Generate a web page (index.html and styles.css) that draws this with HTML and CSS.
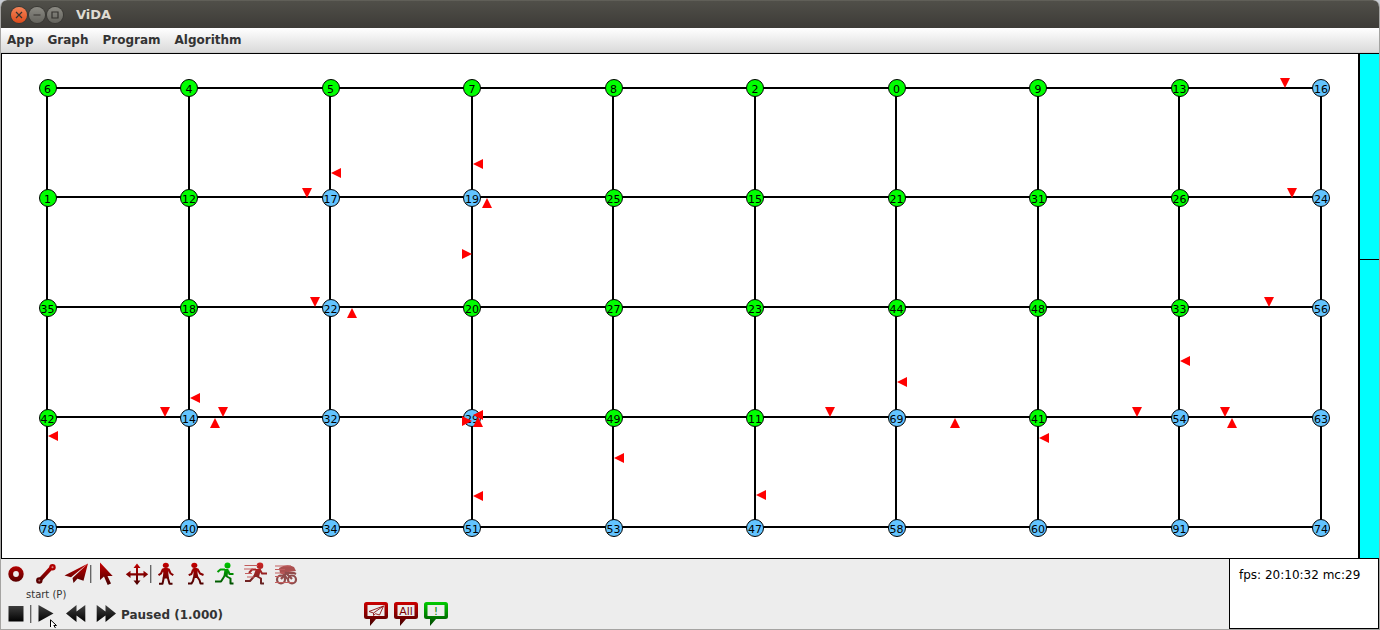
FILE: index.html
```
<!DOCTYPE html>
<html lang="en">
<head>
<meta charset="utf-8">
<title>ViDA</title>
<link rel="stylesheet" href="styles.css">
</head>
<body>
<svg class="defs" aria-hidden="true">
  <defs>
    <linearGradient id="red" gradientUnits="userSpaceOnUse" x1="0" y1="3" x2="0" y2="27"><stop offset="0" stop-color="#cc0000"/><stop offset="1" stop-color="#400000"/></linearGradient>
    <linearGradient id="green" gradientUnits="userSpaceOnUse" x1="0" y1="3" x2="0" y2="27"><stop offset="0" stop-color="#00cc00"/><stop offset="1" stop-color="#004400"/></linearGradient>
    <linearGradient id="black" gradientUnits="userSpaceOnUse" x1="0" y1="5" x2="0" y2="23"><stop offset="0" stop-color="#444"/><stop offset="1" stop-color="#000"/></linearGradient>
  </defs>
</svg>
<div class="window">
  <header class="titlebar">
    <button class="wm wm-close" aria-label="Close"><svg viewBox="0 0 16 16"><path d="M5 5l6 6M11 5l-6 6"/></svg></button>
    <button class="wm" aria-label="Minimize"><svg viewBox="0 0 16 16"><path d="M4.500 8h7"/></svg></button>
    <button class="wm" aria-label="Maximize"><svg viewBox="0 0 16 16"><path d="M5 5h6v6h-6z"/></svg></button>
    <h1 class="title">ViDA</h1>
  </header>
  <nav class="menubar">
    <button class="menu">App</button>
    <button class="menu">Graph</button>
    <button class="menu">Program</button>
    <button class="menu">Algorithm</button>
  </nav>
  <main class="workspace">
    <svg class="graph" id="graph" viewBox="2 54 1356 504" role="img" aria-label="Graph"></svg>
    <aside class="levels"><div class="level level-top"></div><div class="level level-bottom"></div></aside>
  </main>
  <footer class="panel">
    <div class="controls">
      <div class="row">
        <button class="tool" aria-label="Add vertex"><svg viewBox="0 0 30 30"><circle cx="15" cy="15" r="5.300" fill="none" stroke="url(#red)" stroke-width="4.800"/></svg></button>
        <button class="tool" aria-label="Add edge"><svg viewBox="0 0 30 30"><path d="M8 22L21 8" stroke="url(#red)" stroke-width="4"/><circle cx="8.300" cy="21.500" r="3.200" fill="#5a0000"/><circle cx="21.500" cy="8.300" r="3.200" fill="#b00000"/><circle cx="8.300" cy="21.500" r="1" fill="#a66"/><circle cx="21.500" cy="8.300" r="1" fill="#d88"/></svg></button>
        <button class="tool" aria-label="Add message"><svg viewBox="0 0 30 30"><path d="M27 4.500L3.500 16.500l6.500 1.800zM27 4.500L11.500 19l1 5 3.200-3.500zM27 4.500L14.500 19l8 2.800z" fill="url(#red)"/></svg></button>
        <span class="sep"></span>
        <button class="tool" aria-label="Select"><svg viewBox="0 0 30 30"><path d="M9 3.500V21l4-3.500 3.700 8.500 3.300-1.600-3.500-7.400h5.200z" fill="url(#red)"/></svg></button>
        <button class="tool" aria-label="Move"><svg viewBox="0 0 30 30"><path d="M16 4.500l3.500 4.500h-2.500v5.200H22.500v-2.500l4.700 3.600-4.700 3.600v-2.500h-5.500v5.200h2.500l-3.500 4.500-3.500-4.500h2.500v-5.200H9.500v2.500l-4.700-3.600 4.700-3.600v2.500h5.500V9h-2.500z" fill="url(#red)"/></svg></button>
        <span class="sep"></span>
        <button class="tool" aria-label="Very slow"><svg viewBox="0 0 30 30"><ellipse cx="14.800" cy="6.300" rx="3" ry="2.600" fill="url(#red)"/><path d="M11.500 9.500q3.300-1.500 6.600 0l-.8 4.500.7 5.500h-6.400l.7-5.500z" fill="url(#red)"/><path d="M12 10l-2 4.500-2.500 1.700M17.600 10l2 4.500 2.700 1.700M12.800 18.500l-1.300 6.300H8M16.800 18.500l1.700 6.300h3" class="limb limb-red"/></svg></button>
        <button class="tool" aria-label="Slow"><svg viewBox="0 0 30 30"><ellipse cx="13.300" cy="6.300" rx="3" ry="2.600" fill="url(#red)"/><path d="M11.500 9.500q3-1.500 5.500 0l-.5 4.500 1 5h-5.500l.5-5z" fill="url(#red)"/><path d="M12 10.500l-1.500 4.500-2.800 1.200M16.500 10l2.500 4.500 3.500 1.500M13 18l-1 4-1.500 2.600H7M16.300 18l2.200 3 1 3.600H22.500" class="limb limb-red"/></svg></button>
        <button class="tool" aria-label="Normal"><svg viewBox="0 0 30 30"><circle cx="16.500" cy="6.500" r="3" fill="url(#green)"/><path d="M13.500 10h4l-1 7.500h-4z" fill="url(#green)"/><path d="M14 10.500H9.500L6.500 13M17 11.500L18.500 15h4M13.500 17l-3.500 5.500H4M15 17l4.500 2.500v5h3" class="limb limb-green"/></svg></button>
        <button class="tool" aria-label="Fast"><svg viewBox="0 0 30 30" class="motion"><circle cx="19" cy="6.700" r="3.300" fill="url(#red)"/><path d="M15 10h5l-2 8h-6z" fill="url(#red)"/><path d="M15 10.500h-4L8 14M19 11l2 3.500h5M13.500 17L9 22H4M15.500 17l4.500 2.500v5h3" class="limb limb-red"/><path d="M3.500 6.500H17M3 10H12M4 14.500H11M6 18H13" class="streak"/></svg></button>
        <button class="tool" aria-label="Very fast"><svg viewBox="0 0 30 30" class="motion"><path d="M8 9Q16 4 23 8l2 4-7 1-4 4-5-3z" fill="#a03535"/><g fill="none" stroke="#803030" stroke-width="2.200"><circle cx="10" cy="20.500" r="4"/><circle cx="21" cy="20.500" r="4"/><path d="M10 20l5-6 6 6M13 14h10l2 1M16 20l-3-5"/></g><path d="M4 7H20M4 10.500H14M4 14H14M4 17.500H10M4 23.500H22" class="streak"/></svg></button>
      </div>
      <div class="hint">start (P)</div>
      <div class="row">
        <button class="tool" aria-label="Stop"><svg viewBox="0 0 30 30"><path d="M7.500 7h15v15.500h-15z" fill="url(#black)"/></svg></button>
        <span class="sep"></span>
        <button class="tool tool-active" aria-label="Start"><svg viewBox="0 0 30 30"><path d="M7.500 6L22.500 14.500 7.500 22.800z" fill="url(#black)"/></svg><svg class="pointer" viewBox="0 0 8 9" aria-hidden="true"><path d="M.5 8V.8L6.500 6.500H3.800L5.500 9" fill="#fff" stroke="#000"/></svg></button>
        <button class="tool" aria-label="Slower"><svg viewBox="0 0 30 30"><path d="M5 14.500L15.500 6v6.500L24.300 6v17l-8.800-6.500V23z" fill="url(#black)"/></svg></button>
        <button class="tool" aria-label="Faster"><svg viewBox="0 0 30 30"><path d="M25 14.500L14.500 6v6.500L5.700 6v17l8.800-6.500V23z" fill="url(#black)"/></svg></button>
        <output class="status">Paused (1.000)</output>
        <button class="tool" aria-label="Message on send"><svg viewBox="0 0 30 30"><path d="M5.500 3h19Q27 3 27 5.500v12Q27 20 24.500 20H15l-6 7V20H5.500Q3 20 3 17.500v-12Q3 3 5.500 3z" fill="url(#red)"/><path d="M6.500 6h17v11h-17z" fill="#ededed"/><path d="M22.500 7L8 12.500l4.500 1.500v2.500l2-1.800 4 1.300zM22.500 7l-10 7" fill="none" stroke="#8c1010" stroke-width=".9"/></svg></button>
        <button class="tool" aria-label="All messages"><svg viewBox="0 0 30 30"><path d="M5.500 3h19Q27 3 27 5.500v12Q27 20 24.500 20H15l-6 7V20H5.500Q3 20 3 17.500v-12Q3 3 5.500 3z" fill="url(#red)"/><path d="M6.500 6h17v11h-17z" fill="#ededed"/><text x="15" y="16" class="bubble bubble-red">All</text></svg></button>
        <button class="tool" aria-label="Alerts"><svg viewBox="0 0 30 30"><path d="M5.500 3h19Q27 3 27 5.500v12Q27 20 24.500 20H15l-6 7V20H5.500Q3 20 3 17.500v-12Q3 3 5.500 3z" fill="url(#green)"/><path d="M6.500 6h17v11h-17z" fill="#ededed"/><text x="15" y="16" class="bubble bubble-green">!</text></svg></button>
      </div>
    </div>
    <div class="info">fps: 20:10:32 mc:29</div>
  </footer>
</div>
<script src="graph.js"></script>
</body>
</html>
```
FILE: styles.css
```
* { box-sizing: border-box; }
body { margin: 0; background: #c9cdd4; font-family: "DejaVu Sans", sans-serif; font-size: 12px; color: #333; }
button { margin: 0; padding: 0; border: 0; background: none; font: inherit; color: inherit; }
.defs { position: absolute; width: 0; height: 0; }

.window { display: flex; flex-direction: column; height: 100vh; border: 1px solid #a5a4a2; border-top: 0; border-radius: 7px 7px 0 0; background: #ededed; overflow: hidden; }

.titlebar { display: flex; align-items: center; gap: 2px; flex: none; height: 28px; margin: 0 -1px; padding-left: 11px; background: linear-gradient(#504f49, #3d3b37); border-top: 1px solid #605f58; border-radius: 7px 7px 0 0; }
.wm { width: 16px; height: 16px; border-radius: 50%; background: linear-gradient(#8b8a83, #64635d); box-shadow: 0 0 0 1px #3a3935; }
.wm-close { background: linear-gradient(#f58458, #dd4b1b); }
.wm svg { display: block; width: 16px; height: 16px; fill: none; stroke: #35332f; stroke-width: 1.2; }
.title { margin: 0 0 0 11px; font-size: 13px; font-weight: bold; line-height: 16px; color: #dfdbd2; }

.menubar { display: flex; align-items: center; gap: 14px; flex: none; height: 25px; padding-left: 6px; background: linear-gradient(#fff, #dadada); border-bottom: 1px solid #ccc; font-weight: bold; }
.menu { line-height: 16px; }

.workspace { display: flex; flex: 1; min-height: 0; border: 1px solid #000; border-right: 0; }
.graph { flex: 1; min-width: 0; height: 100%; background: #fff; }
.edge { stroke: #000; stroke-width: 2; shape-rendering: crispEdges; }
.node { stroke: #000; stroke-width: 1; fill: #63c4ff; }
.node-done { fill: #0f0; }
.node-label { font-size: 11px; text-anchor: middle; fill: #000; }
.message { fill: #f00; }
.levels { display: flex; flex-direction: column; flex: none; width: 21px; border-left: 2px solid #000; background: #0ff; }
.level-top { flex: 205; border-bottom: 1px solid #000; }
.level-bottom { flex: 298; }

.panel { display: flex; justify-content: space-between; flex: none; }
.row { display: flex; align-items: center; height: 30px; }
.tool { position: relative; width: 30px; height: 30px; }
.tool svg { display: block; width: 30px; height: 30px; }
.sep { width: 2px; height: 18px; margin: 0 -1px; border-left: 1px solid #666; border-right: 1px solid #bbb; }
.limb { fill: none; stroke-width: 2; stroke-linejoin: round; }
.limb-red { stroke: url(#red); }
.limb-green { stroke: url(#green); }
.streak { fill: none; stroke: #b44; stroke-width: 1; }
.motion { filter: blur(0.5px); opacity: 0.85; }
.hint { height: 10px; padding-left: 25px; font-size: 10px; line-height: 12px; }
.tool .pointer { position: absolute; left: 19px; top: 20px; width: 8px; height: 9px; }
.status { width: 240px; padding-top: 2px; font-weight: bold; }
.bubble { font-size: 11px; text-anchor: middle; }
.bubble-red { fill: #7c0000; }
.bubble-green { fill: #080; }
.info { width: 150px; padding: 8px 9px; border: 1px solid #000; border-top: 0; background: #fff; color: #000; line-height: 16px; }
```
FILE: graph.js
```
const columns = [47, 188.5, 330, 471.5, 613, 754.5, 896, 1037.5, 1179, 1320.5];
const rows = [88, 197, 307, 417, 527];
const ids = [
  [6, 4, 5, 7, 8, 2, 0, 9, 13, 16],
  [1, 12, 17, 19, 25, 15, 21, 31, 26, 24],
  [35, 18, 22, 20, 27, 23, 44, 48, 33, 56],
  [42, 14, 32, 29, 49, 11, 69, 41, 54, 63],
  [78, 40, 34, 51, 53, 47, 58, 60, 91, 74]
];
const pending = new Set([16, 17, 19, 24, 22, 56, 14, 32, 29, 69, 54, 63, 78, 40, 34, 51, 53, 47, 58, 60, 91, 74]);
const shapes = { down: "l-5-10h10z", up: "l-5 10h10z", left: "l10-5v10z", right: "l-10-5v10z" };
const messages = {
  down: [[1285, 88], [307, 198], [1292, 198], [315, 307], [1269, 307], [165, 417], [223, 417], [830, 417], [1137, 417], [1225, 417]],
  up: [[487, 198], [352, 308], [215, 418], [478, 417], [955, 418], [1232, 418]],
  left: [[331, 173], [473, 164], [190, 398], [473, 496], [614, 458], [756, 495], [897, 382], [1180, 361], [1039, 438], [48, 436], [473, 415]],
  right: [[472, 254], [472, 421]]
};

const graph = document.getElementById("graph");

function draw(tag, attributes, text) {
  const element = document.createElementNS("http://www.w3.org/2000/svg", tag);
  for (const name in attributes) element.setAttribute(name, attributes[name]);
  if (text !== undefined) element.textContent = text;
  graph.appendChild(element);
}

rows.forEach(y => draw("line", { class: "edge", x1: columns[0], x2: columns[9], y1: y, y2: y }));
columns.map(Math.round).forEach(x => draw("line", { class: "edge", x1: x, x2: x, y1: rows[0], y2: rows[4] }));
ids.forEach((line, r) => line.forEach((id, c) => {
  const x = Math.floor(columns[c] + 1);
  const y = rows[0] + 110 * r;
  draw("circle", { class: pending.has(id) ? "node" : "node node-done", cx: x, cy: y, r: 8.5 });
  draw("text", { class: "node-label", x: columns[c] + 0.5, y: y + 5 }, id);
}));
for (const direction in messages) {
  messages[direction].forEach(([x, y]) => draw("path", { class: "message", d: `M${x} ${y}${shapes[direction]}` }));
}
```
